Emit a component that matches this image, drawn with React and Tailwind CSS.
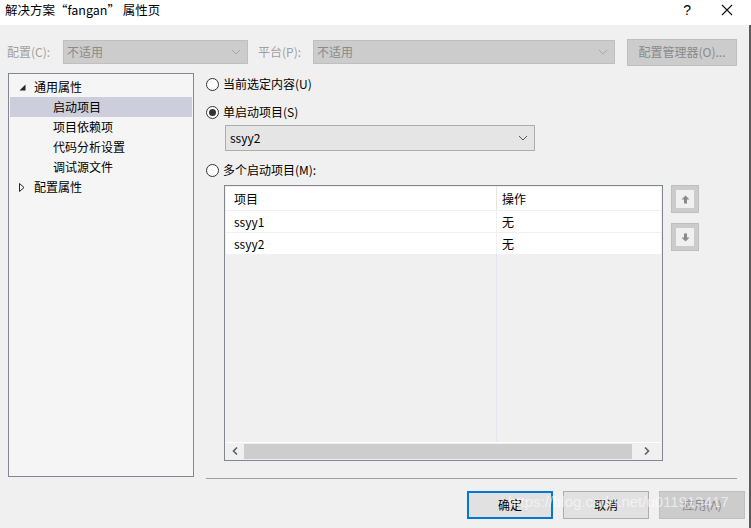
const font = { fontFamily: '"Noto Sans CJK SC", "Noto Sans", sans-serif' };

function Radio({ checked, label }) {
  return (
    <div className="flex items-center h-[20px]">
      <span className="w-[13px] h-[13px] rounded-full border border-[#333] bg-white flex items-center justify-center">
        {checked && <span className="w-[7px] h-[7px] rounded-full bg-[#333]" />}
      </span>
      <span className="ml-[4px] text-[12px] text-[#000]">{label}</span>
    </div>
  );
}

function Chevron({ color = "#999" }) {
  return (
    <svg width="10" height="6" viewBox="0 0 10 6">
      <path d="M1 1 L5 5 L9 1" fill="none" stroke={color} strokeWidth="1" />
    </svg>
  );
}

function MoveButton({ down }) {
  return (
    <div className="w-[28px] h-[28px] bg-[#cccccc] border border-[#bfbfbf] flex items-center justify-center">
      <div className="w-[18px] h-[18px] bg-[#f0f0f0] flex items-center justify-center">
        <svg width="9" height="9" viewBox="0 0 9 9" className={down ? "rotate-180" : ""}>
          <path d="M4.5 0.5 L8.5 4.5 L6 4.5 L6 8.5 L3 8.5 L3 4.5 L0.5 4.5 Z" fill="#8a8a8a" />
        </svg>
      </div>
    </div>
  );
}

export default function App() {
  const tree = [
    { label: "通用属性", level: 0, open: true },
    { label: "启动项目", level: 1, selected: true },
    { label: "项目依赖项", level: 1 },
    { label: "代码分析设置", level: 1 },
    { label: "调试源文件", level: 1 },
    { label: "配置属性", level: 0, open: false },
  ];
  const rows = [
    ["ssyy1", "无"],
    ["ssyy2", "无"],
  ];

  return (
    <div className="relative w-[751px] h-[528px] bg-[#f0f0f0] overflow-hidden select-none" style={font}>
      {/* title bar */}
      <div className="h-[25px] bg-white flex items-start pt-[1px] pl-[5px] pr-[18px]">
        <span className="text-[12.5px] text-black leading-[18px]">解决方案“fangan” 属性页</span>
        <span className="ml-auto mr-[30px] text-[14px] leading-[18px] text-black" style={{ fontFamily: '"Liberation Sans", sans-serif' }}>?</span>
        <svg width="12" height="12" viewBox="0 0 12 12" className="mt-[3px]">
          <path d="M1 1 L11 11 M11 1 L1 11" stroke="#111" strokeWidth="1.1" />
        </svg>
      </div>
      <div className="absolute right-0 top-[25px] bottom-0 w-[2px] bg-[#5a5a5a]" />

      {/* configuration row */}
      <div className="flex items-center mt-[14px] h-[26px] pl-[7px]">
        <span className="w-[56px] text-[12px] text-[#a0a0a0]">配置(C):</span>
        <div className="w-[185px] h-[24px] bg-[#cccccc] border border-[#bfbfbf] flex items-center pl-[3px] pr-[6px]">
          <span className="text-[12px] text-[#8a8a8a]">不适用</span>
          <span className="ml-auto"><Chevron color="#a8a8a8" /></span>
        </div>
        <span className="ml-[10px] w-[55px] text-[12px] text-[#a0a0a0]">平台(P):</span>
        <div className="w-[302px] h-[24px] bg-[#cccccc] border border-[#bfbfbf] flex items-center pl-[3px] pr-[6px]">
          <span className="text-[12px] text-[#8a8a8a]">不适用</span>
          <span className="ml-auto"><Chevron color="#a8a8a8" /></span>
        </div>
        <div className="ml-[12px] w-[110px] h-[27px] bg-[#cccccc] border border-[#bfbfbf] flex items-center justify-center">
          <span className="text-[12px] text-[#8a8a8a]">配置管理器(O)...</span>
        </div>
      </div>

      {/* main */}
      <div className="flex mt-[8px] pl-[8px]">
        <div className="w-[186px] h-[404px] bg-[#f5f5f5] border border-[#828790] pt-[3px] px-[1px]">
          {tree.map((t) => (
            <div
              key={t.label}
              className={`h-[20px] flex items-center text-[12px] text-black ${t.selected ? "bg-[#cccedb]" : ""}`}
              style={{ paddingLeft: t.level ? 43 : 9 }}
            >
              {t.level === 0 && (
                <span className="w-[15px] flex items-center">
                  {t.open ? (
                    <svg width="7" height="7" viewBox="0 0 7 7">
                      <path d="M6.5 0.5 L6.5 6.5 L0.5 6.5 Z" fill="#262626" />
                    </svg>
                  ) : (
                    <svg width="6" height="9" viewBox="0 0 6 9">
                      <path d="M0.5 0.5 L5 4.5 L0.5 8.5 Z" fill="none" stroke="#262626" strokeWidth="1" />
                    </svg>
                  )}
                </span>
              )}
              <span>{t.label}</span>
            </div>
          ))}
        </div>

        <div className="ml-[12px] w-[531px] flex flex-col">
          <div className="pt-[1px]">
            <Radio label="当前选定内容(U)" />
          </div>
          <div className="mt-[8px]">
            <Radio checked label="单启动项目(S)" />
          </div>
          <div className="ml-[19px] mt-[3px] w-[310px] h-[26px] bg-[#e5e5e5] border border-[#acacac] flex items-center pl-[4px] pr-[6px]">
            <span className="text-[12px] text-black">ssyy2</span>
            <span className="ml-auto"><Chevron color="#555" /></span>
          </div>
          <div className="mt-[9px]">
            <Radio label="多个启动项目(M):" />
          </div>

          <div className="flex mt-[5px]">
            <div className="ml-[18px] w-[439px] h-[276px] border border-[#828790] bg-[#f0f0f0] flex flex-col p-[1px]">
              <div className="flex-1 flex flex-col">
                <div className="flex h-[23px] bg-white items-center text-[12px] text-black">
                  <span className="w-[271px] pl-[8px] h-full flex items-center border-r border-[#e5e5e5]">项目</span>
                  <span className="pl-[5px]">操作</span>
                </div>
                {rows.map(([a, b]) => (
                  <div key={a} className="flex h-[22px] bg-white items-center text-[12px] text-black border-t border-[#f0f0f0]">
                    <span className="w-[271px] pl-[8px] h-full flex items-center border-r border-[#f0f0f0]">{a}</span>
                    <span className="pl-[5px]">{b}</span>
                  </div>
                ))}
                <div className="flex-1 flex">
                  <div className="w-[271px] border-r border-[#e3e6ee]" />
                </div>
              </div>
              <div className="h-[17px] border-t border-white flex items-center">
                <span className="w-[18px] flex justify-center">
                  <svg width="6" height="8" viewBox="0 0 6 8">
                    <path d="M5 0.5 L1.5 4 L5 7.5" fill="none" stroke="#606060" strokeWidth="1.6" />
                  </svg>
                </span>
                <div className="w-[388px] h-[15px] bg-[#cdcdcd]" />
                <span className="flex-1 flex justify-center">
                  <svg width="6" height="8" viewBox="0 0 6 8">
                    <path d="M1 0.5 L4.5 4 L1 7.5" fill="none" stroke="#606060" strokeWidth="1.6" />
                  </svg>
                </span>
              </div>
            </div>
            <div className="ml-[8px] flex flex-col gap-[10px]">
              <MoveButton />
              <MoveButton down />
            </div>
          </div>

          <div className="mt-[17px] h-[1px] bg-[#a0a0a0]" />
        </div>
      </div>

      {/* bottom buttons */}
      <div className="flex mt-[12px] pl-[467px] gap-[10px]">
        <div className="w-[86px] h-[28px] bg-[#e1e1e1] border-2 border-[#0078d7] flex items-center justify-center text-[12px] text-black">确定</div>
        <div className="w-[86px] h-[28px] bg-[#e1e1e1] border border-[#adadad] flex items-center justify-center text-[12px] text-black">取消</div>
        <div className="w-[86px] h-[28px] bg-[#cccccc] border border-[#bfbfbf] flex items-center justify-center text-[12px] text-[#8a8a8a]">应用(A)</div>
      </div>

      {/* watermark */}
      <div
        className="absolute left-[508px] top-[493px] text-[15px] leading-[18px] text-white/60 pointer-events-none whitespace-nowrap"
        style={{ fontFamily: '"Liberation Sans", sans-serif' }}
      >
        https://blog.csdn.net/u011913417
      </div>
    </div>
  );
}
